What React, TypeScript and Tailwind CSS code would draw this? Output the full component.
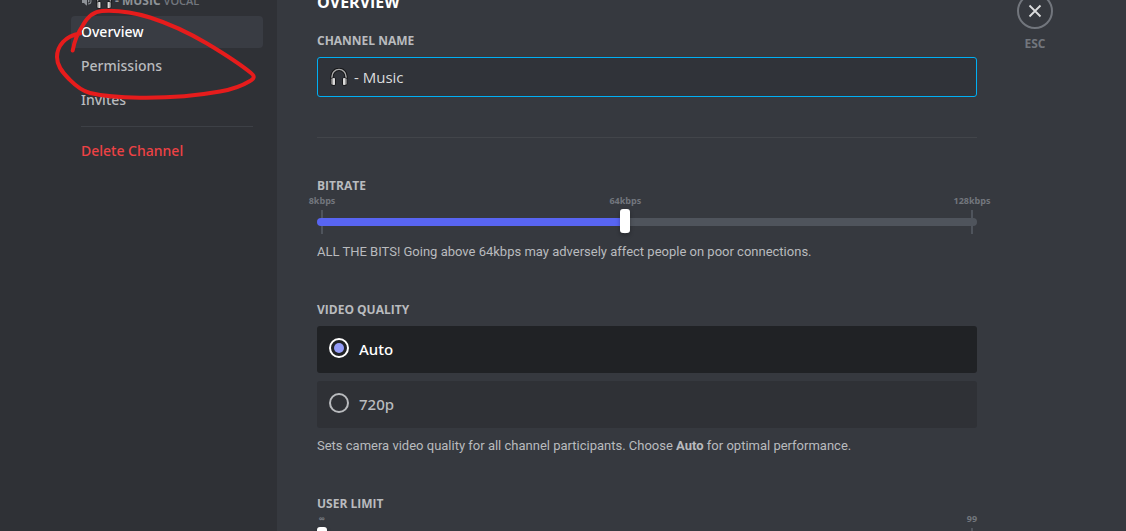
import { useState } from "react";
import type { ReactNode } from "react";

function Headphones({ className }: { className: string }) {
  return (
    <svg viewBox="0 0 18 18" className={className} aria-hidden="true">
      <path d="M2 11V8.400a7 7 0 0 1 14 0V11" fill="none" stroke="#17181a" strokeWidth="3.4" />
      <path d="M2 11V8.400a7 7 0 0 1 14 0V11" fill="none" stroke="#a9a9a9" strokeWidth="1.4" />
      <rect x="0.6" y="9.4" width="5.4" height="8.4" rx="2" fill="#17181a" />
      <rect x="12" y="9.4" width="5.4" height="8.4" rx="2" fill="#17181a" />
      <rect x="1.2" y="10.2" width="2.8" height="6.6" rx="1.2" fill="#8a8a8a" />
      <rect x="2.800" y="10" width="2.2" height="7" rx="0.8" fill="#dadada" />
      <rect x="14" y="10.2" width="2.8" height="6.6" rx="1.2" fill="#8a8a8a" />
      <rect x="13" y="10" width="2.2" height="7" rx="0.8" fill="#dadada" />
    </svg>
  );
}

function Speaker() {
  return (
    <svg viewBox="0 0 24 24" className="size-3 shrink-0 fill-[#8e9297]" aria-hidden="true">
      <path d="M11.4 3.1c.4.1.6.5.6.9v16c0 .4-.2.8-.6.9-.4.2-.8.1-1.1-.2L6 16H3a1 1 0 0 1-1-1V9a1 1 0 0 1 1-1h3l4.3-4.7c.3-.3.7-.4 1.1-.2ZM14 5v2a5 5 0 0 1 0 10v2a7 7 0 1 0 0-14Zm0 4v6a3 3 0 0 0 0-6Z" />
    </svg>
  );
}

function Scribble() {
  return (
    <svg viewBox="0 0 277 120" className="pointer-events-none absolute top-0 left-0 h-[120px] w-[277px]" aria-hidden="true">
      <path
        d="M72.7 50.5C74 43 77 34 83 25C87 18 93 11.5 102 11C118 10 134 12.500 150 17.500C172 24.500 190 33.500 207 43.500C222 52.500 240 64 251 73C255 76 254.500 78.500 250 81C241 86.500 232 89.500 220 91.500C195 96 165 98 140 97.700C122 97.500 105 96.500 90 93C80 90.500 74 84 69 79C61 71 57 65 57 57C57 46 65 36 80 33.500"
        fill="none"
        stroke="#e61c1c"
        strokeWidth="4"
        strokeLinecap="round"
        strokeLinejoin="round"
      />
    </svg>
  );
}

const navItem = "flex h-8 items-center rounded px-2.5 font-['Noto_Sans',sans-serif] text-[14px] leading-5 font-medium";
const heading = "block text-[12px] leading-4 font-bold text-[#b9bbbe] uppercase";
const help = "font-['Roboto','Open_Sans',sans-serif] text-[13px] leading-5 text-[#b9bbbe]";

type Mark = { value: number; text: string };

function Slider(props: { id: string; min: number; max: number; initial: number; marks: Mark[] }) {
  const { id, min, max, initial, marks } = props;
  const [value, setValue] = useState(initial);
  const percent = (v: number) => ((v - min) / (max - min)) * 100;
  const fill = percent(value);
  return (
    <div className="pb-px">
      <div className="relative mx-[5px] h-[15px]">
        {marks.map((m) => (
          <span
            key={m.value}
            className="absolute top-0 -translate-x-1/2 text-[9px] leading-[13px] font-bold text-[#72767d]"
            style={{ left: `${percent(m.value)}%` }}
          >
            {m.text}
          </span>
        ))}
      </div>
      <div className="relative h-6">
        <div className="absolute inset-x-[5px] inset-y-0 top-px">
          {marks.map((m) => (
            <span
              key={m.value}
              className="absolute h-6 w-0.5 -translate-x-1/2 bg-[#4f545c]"
              style={{ left: `${percent(m.value)}%` }}
            />
          ))}
        </div>
        <div
          className="absolute inset-x-0 top-[9px] h-2 rounded"
          style={{ background: `linear-gradient(to right, #5865f2 ${fill}%, #4f545c ${fill}%)` }}
        />
        <input
          id={id}
          type="range"
          min={min}
          max={max}
          value={value}
          onChange={(e) => setValue(Number(e.target.value))}
          className="relative block h-6 w-full appearance-none bg-transparent outline-none [&::-webkit-slider-thumb]:h-6 [&::-webkit-slider-thumb]:w-2.5 [&::-webkit-slider-thumb]:appearance-none [&::-webkit-slider-thumb]:rounded-[3px] [&::-webkit-slider-thumb]:bg-white [&::-webkit-slider-thumb]:shadow-[0_2px_4px_rgba(0,0,0,0.3)]"
        />
      </div>
    </div>
  );
}

function Option(props: { checked: boolean; onSelect: () => void; children: ReactNode }) {
  const { checked, onSelect, children } = props;
  return (
    <label
      className={
        checked
          ? "flex h-[47px] items-start gap-2.5 rounded-[3px] bg-[#202225] px-3 pt-3 font-['Noto_Sans',sans-serif] text-[15px] leading-[22px] font-medium text-white"
          : "flex h-[47px] items-start gap-2.5 rounded-[3px] bg-[#2f3136] px-3 pt-3 font-['Noto_Sans',sans-serif] text-[15px] leading-[22px] font-medium text-[#b9bbbe]"
      }
    >
      <span className="grid size-5 place-items-center">
        <input
          type="radio"
          name="video-quality"
          checked={checked}
          onChange={onSelect}
          className="col-start-1 row-start-1 size-5 appearance-none rounded-full border-2 border-current outline-none"
        />
        {checked && <span className="col-start-1 row-start-1 size-2.5 rounded-full bg-[#949cf7]" />}
      </span>
      {children}
    </label>
  );
}

export default function App() {
  const [name, setName] = useState("- Music");
  const [quality, setQuality] = useState("auto");
  return (
    <div className="relative flex h-screen overflow-hidden bg-[#36393f] font-['Open_Sans','Noto_Sans',sans-serif]">
      <nav className="flex w-[277px] shrink-0 justify-end bg-[#2f3136] pr-3.5">
        <div className="-mt-[7px] flex w-48 flex-col">
          <div className="mb-[7px] flex h-4 items-center gap-[3px] px-2.5 text-[12px] leading-4 whitespace-nowrap uppercase">
            <Speaker />
            <Headphones className="size-4 shrink-0" />
            <span className="font-bold text-[#8e9297]">- Music</span>
            <span className="text-[11px] font-semibold text-[#72767d]">Vocal</span>
          </div>
          <div className="flex flex-col gap-0.5">
            <a href="#overview" className={`${navItem} bg-[#393c43] text-white`}>Overview</a>
            <a href="#permissions" className={`${navItem} text-[#b9bbbe]`}>Permissions</a>
            <a href="#invites" className={`${navItem} text-[#b9bbbe]`}>Invites</a>
          </div>
          <hr className="mx-2.5 mt-2.5 mb-2 border-[#3d4046]" />
          <button type="button" className={`${navItem} text-[#ed4245]`}>Delete Channel</button>
        </div>
      </nav>

      <main className="flex min-w-0 flex-1 items-start gap-10 pl-10">
        <div className="-mt-2 w-full max-w-[660px] min-w-0">
          <h2 className="mb-[21px] text-[16px] leading-5 font-bold text-white uppercase">Overview</h2>

          <label htmlFor="channel-name" className={`${heading} mb-2`}>Channel name</label>
          <div className="flex h-10 items-center gap-1.5 rounded-[3px] border border-[#00aff4] bg-[#303339] px-3">
            <Headphones className="size-[18px] shrink-0" />
            <input
              id="channel-name"
              value={name}
              onChange={(e) => setName(e.target.value)}
              className="min-w-0 flex-1 bg-transparent text-[15px] leading-5 text-[#dcddde] outline-none"
            />
          </div>

          <hr className="my-10 border-[#42454a]" />

          <section className="mb-10">
            <label htmlFor="bitrate" className={heading}>Bitrate</label>
            <Slider
              id="bitrate"
              min={8}
              max={128}
              initial={64}
              marks={[
                { value: 8, text: "8kbps" },
                { value: 64, text: "64kbps" },
                { value: 128, text: "128kbps" },
              ]}
            />
            <p className={`${help} mt-2`}>
              ALL THE BITS! Going above 64kbps may adversely affect people on poor connections.
            </p>
          </section>

          <section className="mb-10">
            <h3 className={`${heading} mb-2`}>Video quality</h3>
            <div className="flex flex-col gap-2">
              <Option checked={quality === "auto"} onSelect={() => setQuality("auto")}>Auto</Option>
              <Option checked={quality === "720p"} onSelect={() => setQuality("720p")}>720p</Option>
            </div>
            <p className={`${help} mt-2`}>
              Sets camera video quality for all channel participants. Choose{" "}
              <strong className="font-bold">Auto</strong> for optimal performance.
            </p>
          </section>

          <section>
            <label htmlFor="user-limit" className={heading}>User limit</label>
            <Slider
              id="user-limit"
              min={0}
              max={99}
              initial={0}
              marks={[
                { value: 0, text: "∞" },
                { value: 99, text: "99" },
              ]}
            />
          </section>
        </div>

        <button type="button" className="-mt-[7px] flex w-9 shrink-0 flex-col items-center gap-[7px] text-[#72767d]">
          <span className="flex size-9 items-center justify-center rounded-full border-2 border-current">
            <svg viewBox="0 0 18 18" className="size-[18px]" aria-hidden="true">
              <path d="M3.500 3.500l11 11M14.500 3.500l-11 11" stroke="#dcddde" strokeWidth="1.800" />
            </svg>
          </span>
          <span className="text-[12px] leading-4 font-bold">ESC</span>
        </button>
      </main>

      <Scribble />
    </div>
  );
}
